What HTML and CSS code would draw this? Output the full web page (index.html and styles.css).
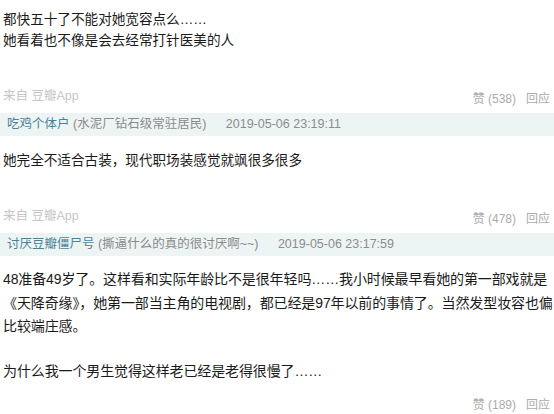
FILE: index.html
```html
<!DOCTYPE html>
<html lang="zh-CN">
<head>
  <meta charset="UTF-8" />
  <meta name="viewport" content="width=device-width, initial-scale=1.0" />
  <title>评论</title>
  <link rel="stylesheet" href="styles.css">
</head>
<body>

  <div class="comment first">
    <div class="text">
      <p>都快五十了不能对她宽容点么……<br>她看着也不像是会去经常打针医美的人</p>
    </div>
    <div class="foot">
      <span class="source">来自 豆瓣App</span>
      <span class="actions"><span>赞 (538)</span><span>回应</span></span>
    </div>
  </div>

  <div class="comment">
    <div class="meta">
      <span class="author">吃鸡个体户</span>
      <span class="sign">(水泥厂钻石级常驻居民)</span>
      <span class="date">2019-05-06 23:19:11</span>
    </div>
    <div class="text">
      <p>她完全不适合古装，现代职场装感觉就飒很多很多</p>
    </div>
    <div class="foot">
      <span class="source">来自 豆瓣App</span>
      <span class="actions"><span>赞 (478)</span><span>回应</span></span>
    </div>
  </div>

  <div class="comment">
    <div class="meta">
      <span class="author">讨厌豆瓣僵尸号</span>
      <span class="sign">(撕逼什么的真的很讨厌啊~~)</span>
      <span class="date">2019-05-06 23:17:59</span>
    </div>
    <div class="text long">
      <p>48准备49岁了。这样看和实际年龄比不是很年轻吗……我小时候最早看她的第一部戏就是<br>《天降奇缘》，她第一部当主角的电视剧，都已经是97年以前的事情了。当然发型妆容也偏<br>比较端庄感。</p>
      <p>为什么我一个男生觉得这样老已经是老得很慢了……</p>
    </div>
    <div class="foot last">
      <span class="source"></span>
      <span class="actions"><span>赞 (189)</span><span>回应</span></span>
    </div>
  </div>

</body>
</html>
```

FILE: styles.css
```css
* {
  box-sizing: border-box;
}

body {
  margin: 0;
  background: #fff;
  font-family: "Liberation Sans", "Noto Sans CJK SC", sans-serif;
  color: #1a1a1a;
  overflow: hidden;
}

p {
  margin: 0;
}

.text {
  padding: 0 3px;
  margin-top: 14px;
  font-size: 13.6px;
  line-height: 21px;
  white-space: nowrap;
}

.comment.first .text {
  margin-top: 9px;
}

.text.long {
  margin-top: 12px;
  font-size: 14px;
  line-height: 23.5px;
  letter-spacing: -0.12px;
}

.text.long p + p {
  margin-top: 21px;
}

.meta {
  height: 23px;
  line-height: 23px;
  padding: 0 7px;
  background: #edf5f4;
  font-size: 12.5px;
  color: #8a8a8a;
  white-space: nowrap;
}

.author {
  color: #4b8198;
}

.date {
  margin-left: 16px;
  color: #8c8c8c;
}

.foot {
  display: flex;
  justify-content: space-between;
  align-items: flex-start;
  margin-top: 37px;
  margin-bottom: 6px;
  padding: 0 4px 0 3px;
  line-height: 16px;
}

.foot.last {
  margin-top: 11px;
}

.source {
  font-size: 12.5px;
  color: #c6c6c6;
}

.actions {
  display: flex;
  gap: 10px;
  margin-top: 3px;
  font-size: 12px;
  color: #ababab;
}
```
